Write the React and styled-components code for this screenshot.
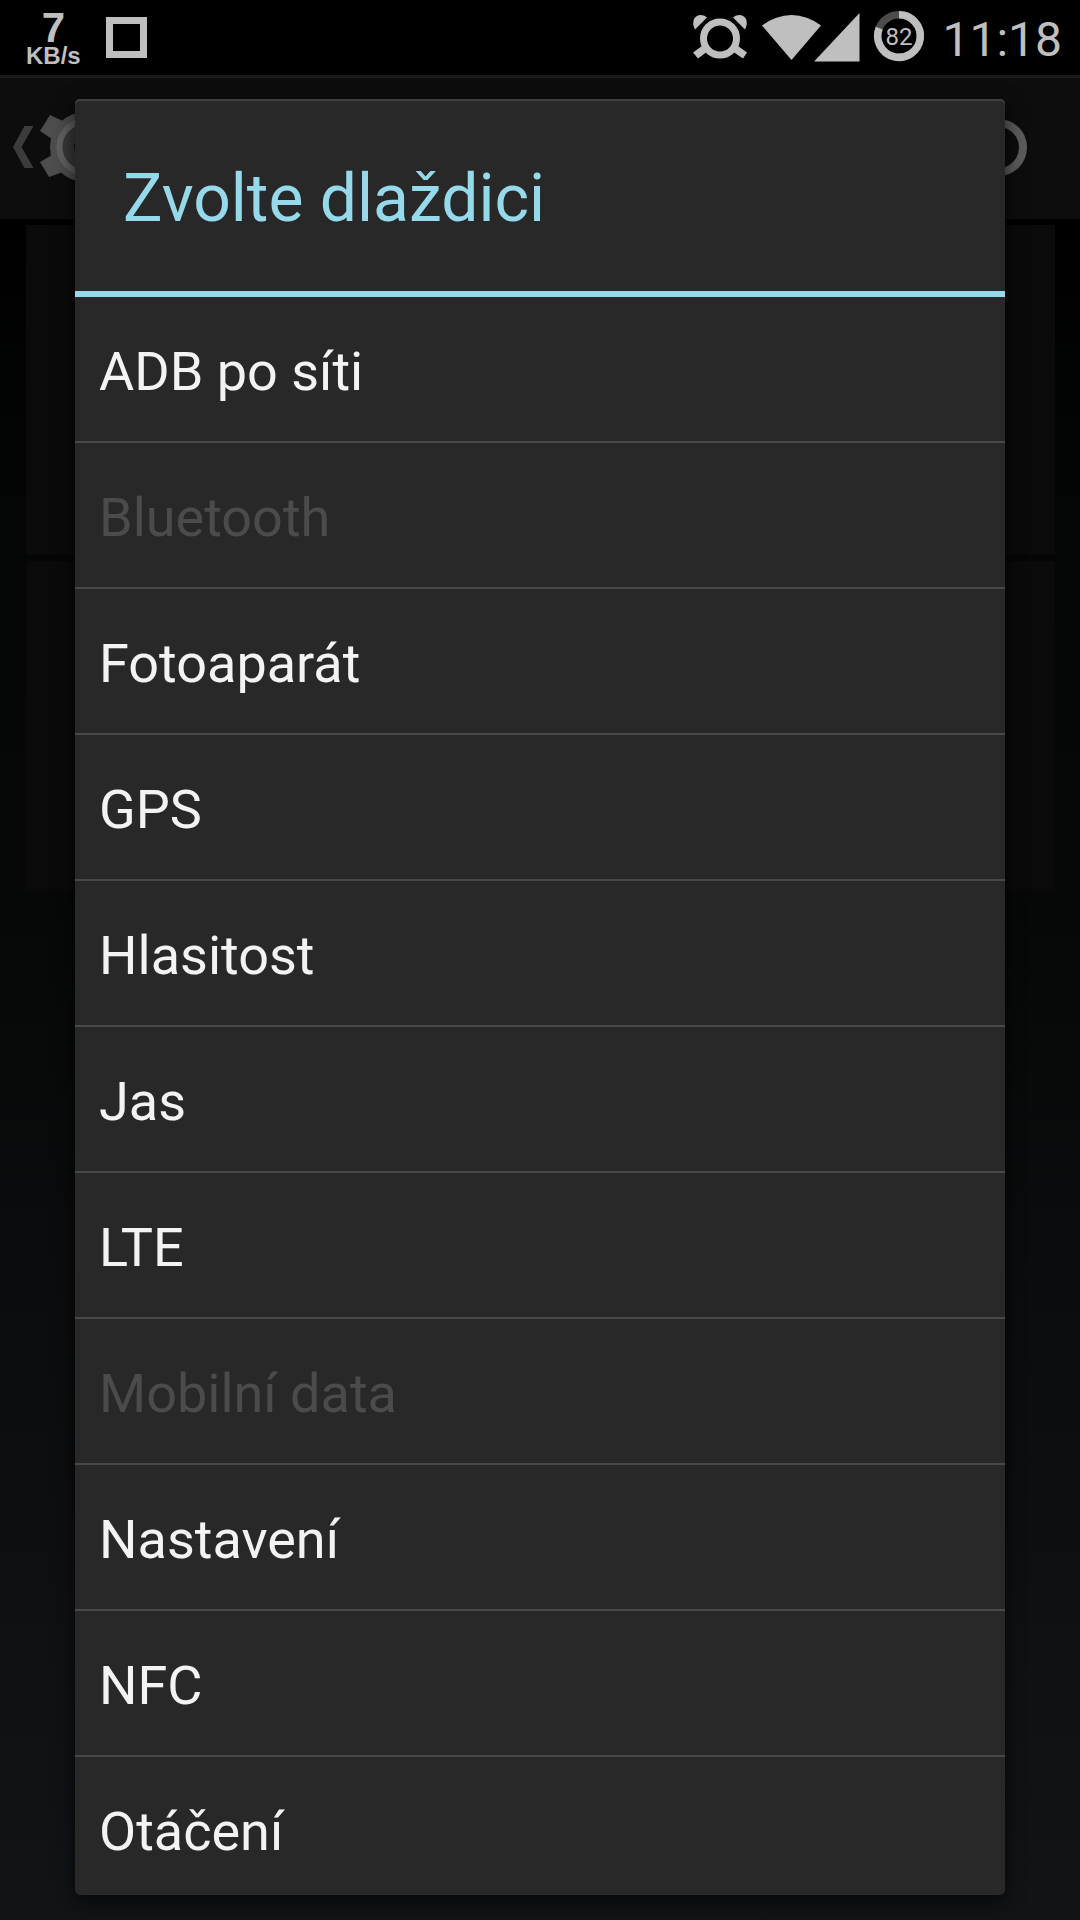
import React from "react";
import styled, { createGlobalStyle } from "styled-components";

const GlobalStyle = createGlobalStyle`
  *, *::before, *::after { box-sizing: border-box; }
  body {
    margin: 0;
    background: #000;
    font-family: Roboto, "Noto Sans", sans-serif;
  }
`;

const Screen = styled.div`
  display: flex;
  flex-direction: column;
  min-height: 100vh;
  position: relative;
  background: linear-gradient(#000 0, #000 240px, #040606 500px, #060808 900px, #0e0f11 1550px, #111518 100%);
`;

const StatusBar = styled.header`
  display: flex;
  justify-content: space-between;
  height: 75px;
  padding: 0 18px 0 26px;
  background: #000;
  color: #bfbfbf;
`;

const StatusGroup = styled.div`
  display: flex;
  align-items: center;
  gap: ${({ $gap }) => $gap}px;
`;

const Speed = styled.div`
  display: flex;
  flex-direction: column;
  align-items: center;
  font-family: "Liberation Sans", Arial, sans-serif;
  font-weight: 700;
`;

const SpeedValue = styled.span`
  font-size: 42px;
  line-height: 36px;
`;

const SpeedUnit = styled.span`
  font-size: 24px;
  line-height: 20px;
`;

const SquareIcon = styled.span`
  width: 41px;
  height: 41px;
  border: 7px solid #bfbfbf;
`;

const StatusIcons = styled.svg`
  display: block;
  width: 257px;
  height: 75px;
`;

const Clock = styled.time`
  font-size: 48px;
  line-height: 56px;
  padding-top: 4px;
`;

const ActionBar = styled.nav`
  display: flex;
  align-items: center;
  justify-content: space-between;
  height: 144px;
  padding: 0 53px 3px 12px;
  border-top: 3px solid #191919;
  background: #0d0d0d;
`;

const HomeButton = styled.button`
  padding: 0;
  border: 0;
  background: none;
  svg { display: block; }
`;

const TileGrid = styled.div`
  display: flex;
  flex-direction: column;
  gap: 6px;
  padding: 6px 25px 0 26px;
`;

const Tile = styled.div`
  height: 330px;
  background: #0a0a0a;
`;

const Overlay = styled.div`
  position: absolute;
  inset: 75px 0 0;
  display: flex;
  padding: 24px 75px 25px;
  height: calc(100vh - 75px);
`;

const Dialog = styled.section`
  display: flex;
  flex-direction: column;
  flex: 1;
  min-height: 0;
  overflow: hidden;
  border-radius: 5px;
  background: #282828;
  box-shadow: 0 6px 20px rgba(0, 0, 0, 0.7), inset 0 2px 0 #414141;
`;

const DialogTitle = styled.h1`
  flex: none;
  margin: 0;
  padding: 61px 48px 53px;
  border-bottom: 6px solid #96d9ea;
  color: #96d9ea;
  font-size: 66px;
  font-weight: 400;
  line-height: 78px;
`;

const TileList = styled.ul`
  flex: 1;
  min-height: 0;
  margin: 0;
  padding: 0;
  list-style: none;
  overflow-y: auto;
  scrollbar-width: none;
`;

const TileItem = styled.li`
  & + & { border-top: 2px solid #484848; }
`;

const TileButton = styled.button`
  display: block;
  width: 100%;
  height: 144px;
  padding: 6px 24px 0;
  border: 0;
  background: none;
  color: #f3f3f3;
  font: 400 54px/64px Roboto, "Noto Sans", sans-serif;
  text-align: left;
  &:disabled { color: #4b4b4b; }
`;

const tiles = [
  { name: "ADB po síti" },
  { name: "Bluetooth", disabled: true },
  { name: "Fotoaparát" },
  { name: "GPS" },
  { name: "Hlasitost" },
  { name: "Jas" },
  { name: "LTE" },
  { name: "Mobilní data", disabled: true },
  { name: "Nastavení" },
  { name: "NFC" },
  { name: "Otáčení" },
];

function SystemIcons() {
  return (
    <StatusIcons viewBox="685 0 257 75" fill="#bfbfbf" aria-hidden="true">
      <circle cx="720" cy="38.5" r="16.5" fill="none" stroke="#bfbfbf" strokeWidth="7" />
      <path d="M695 29.500C691 22 694 15 701 15Q705 15 707 17.500Z" />
      <path d="M745 29.500C749 22 746 15 739 15Q735 15 733 17.500Z" />
      <path d="M702 46 693 52.500 698 58.500 708 51ZM738 46 747 52.500 743 58.500 732 51Z" />
      <path d="M762 25.500Q776 15 791.500 15T821 25.500L791.500 60Z" />
      <path d="M859.500 13V61.500H814Z" />
      <circle cx="899" cy="36" r="21.300" fill="none" stroke="#4c4c4c" strokeWidth="7.500" />
      <path d="M899 14.700A21.300 21.300 0 1 1 879.200 28.200" fill="none" stroke="#bfbfbf" strokeWidth="7.500" />
      <text x="899" y="45" fontSize="24" textAnchor="middle">82</text>
    </StatusIcons>
  );
}

function SettingsIcon() {
  return (
    <svg width="120" height="96" viewBox="12 99 120 96" aria-hidden="true">
      <path d="M24.500 126H33.500L21.500 147 33.500 168H24.500L13 147Z" fill="#3c3c3c" />
      <g fill="#4d4d4d">
        <circle cx="85" cy="147" r="35" />
        <path d="M50 115 63 121 52 139 40 131ZM40 162 52 155 63 172 49 177Z" />
      </g>
      <circle cx="85" cy="147" r="25.500" fill="#383838" stroke="#606060" strokeWidth="6" />
      <circle cx="85" cy="147" r="11" fill="#161616" />
    </svg>
  );
}

export default function App() {
  return (
    <>
      <GlobalStyle />
      <Screen>
        <StatusBar>
          <StatusGroup $gap={25}>
            <Speed>
              <SpeedValue>7</SpeedValue>
              <SpeedUnit>KB/s</SpeedUnit>
            </Speed>
            <SquareIcon />
          </StatusGroup>
          <StatusGroup $gap={0}>
            <SystemIcons />
            <Clock>11:18</Clock>
          </StatusGroup>
        </StatusBar>
        <ActionBar>
          <HomeButton type="button" aria-label="Zpět">
            <SettingsIcon />
          </HomeButton>
          <HomeButton type="button" aria-label="Přidat">
            <svg width="57" height="57" viewBox="0 0 57 57" aria-hidden="true">
              <circle cx="28.500" cy="28.500" r="24.500" fill="none" stroke="#5c5c5c" strokeWidth="8" />
            </svg>
          </HomeButton>
        </ActionBar>
        <TileGrid>
          <Tile />
          <Tile />
        </TileGrid>
        <Overlay>
          <Dialog role="dialog" aria-modal="true" aria-labelledby="dialog-title">
            <DialogTitle id="dialog-title">Zvolte dlaždici</DialogTitle>
            <TileList>
              {tiles.map((tile) => (
                <TileItem key={tile.name}>
                  <TileButton type="button" disabled={tile.disabled}>
                    {tile.name}
                  </TileButton>
                </TileItem>
              ))}
            </TileList>
          </Dialog>
        </Overlay>
      </Screen>
    </>
  );
}
